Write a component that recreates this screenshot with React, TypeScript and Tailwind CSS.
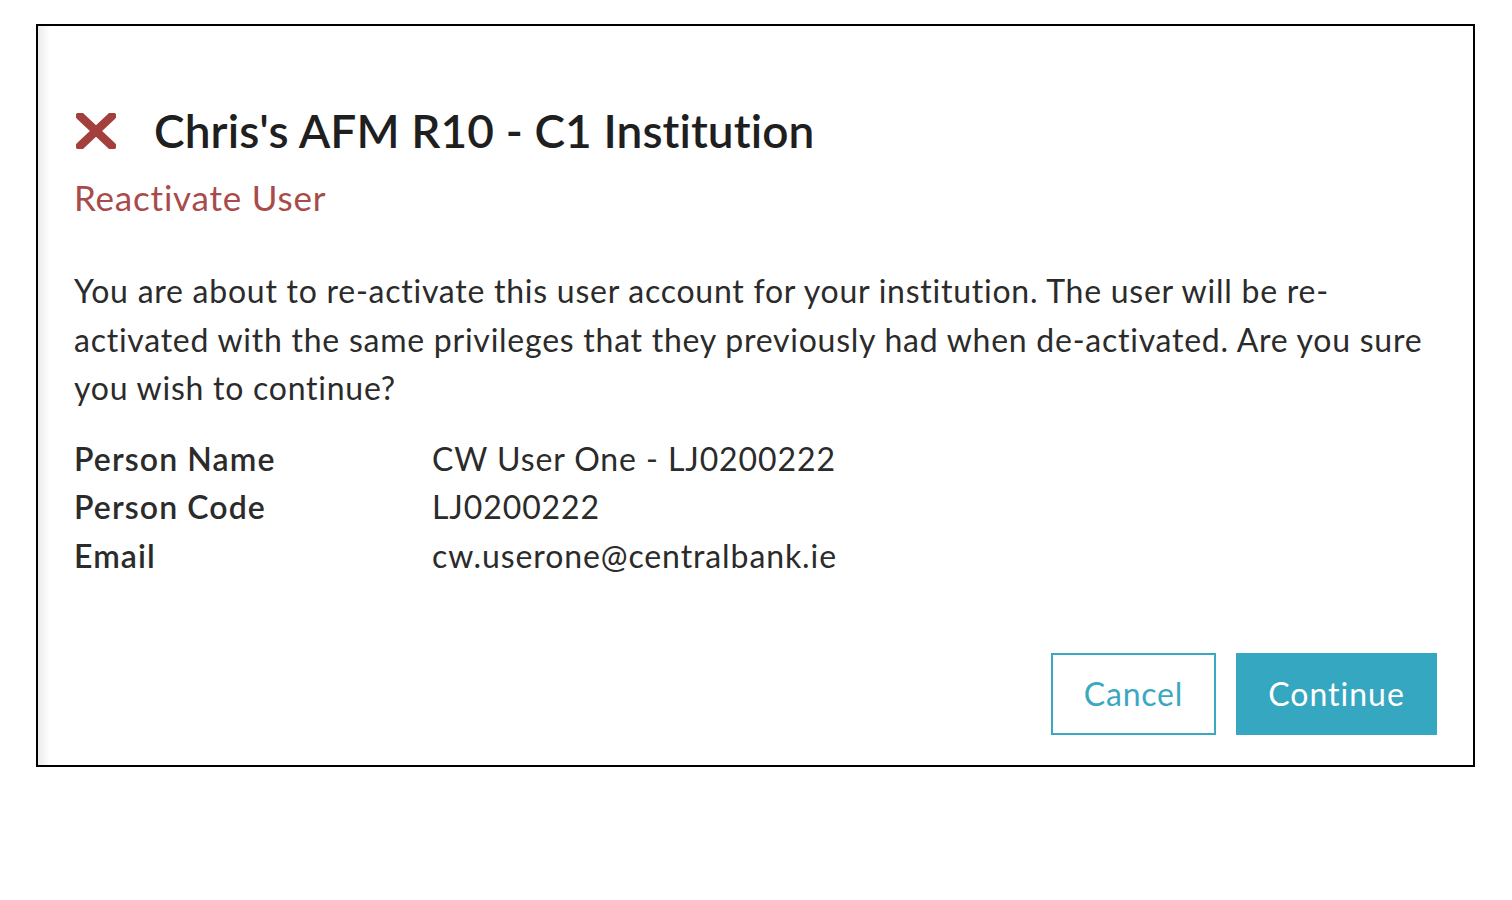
export default function App() {
  return (
    <div className="h-[900px] w-[1512px] bg-white pt-6 pl-9 font-['Lato',sans-serif]">
      <div className="relative h-[743px] w-[1439px] border-2 border-black bg-white">
        <div className="absolute inset-y-0 left-0 w-3 bg-gradient-to-r from-[#ececec] to-white" />
        <div className="relative flex flex-col pt-[77px] pr-9 pl-[36px]">
          <div className="flex items-center gap-[38px]">
            <svg width="40" height="36" viewBox="0 0 40 36" className="ml-[2px]">
              <path
                d="M4 3 L36 33 M36 3 L4 33"
                stroke="#a3403d"
                strokeWidth="8.5"
                strokeLinecap="round"
              />
            </svg>
            <h1 className="text-[46px] leading-[56px] font-semibold tracking-[0.1px] text-[#1f1f1f]">
              Chris's AFM R10 - C1 Institution
            </h1>
          </div>
          <div className="mt-[16px] text-[35px] leading-[44px] tracking-[0.8px] text-[#a84b4b]">Reactivate User</div>
          <p className="mt-[48px] max-w-[1360px] text-[32px] leading-[48.5px] tracking-[0.75px] text-[#2b2b2b]">
            You are about to re-activate this user account for your institution. The user will be re-activated
            with the same privileges that they previously had when de-activated. Are you sure you wish to continue?
          </p>
          <div className="mt-[22px] grid grid-cols-[358px_1fr] text-[32px] leading-[48.5px] tracking-[0.9px] text-[#2b2b2b]">
            <div className="font-semibold tracking-[1.1px]">Person Name</div>
            <div>CW User One - LJ0200222</div>
            <div className="font-semibold tracking-[1.1px]">Person Code</div>
            <div>LJ0200222</div>
            <div className="font-semibold tracking-[1.1px]">Email</div>
            <div>cw.userone@centralbank.ie</div>
          </div>
          <div className="mt-[73px] flex justify-end gap-5">
            <button className="h-[82px] w-[165px] border-2 border-[#3ba8c1] bg-white text-[32px] tracking-[0.8px] text-[#3ba8c1]">
              Cancel
            </button>
            <button className="h-[82px] w-[201px] bg-[#36a7c1] text-[32px] tracking-[1px] text-white">Continue</button>
          </div>
        </div>
      </div>
    </div>
  );
}
